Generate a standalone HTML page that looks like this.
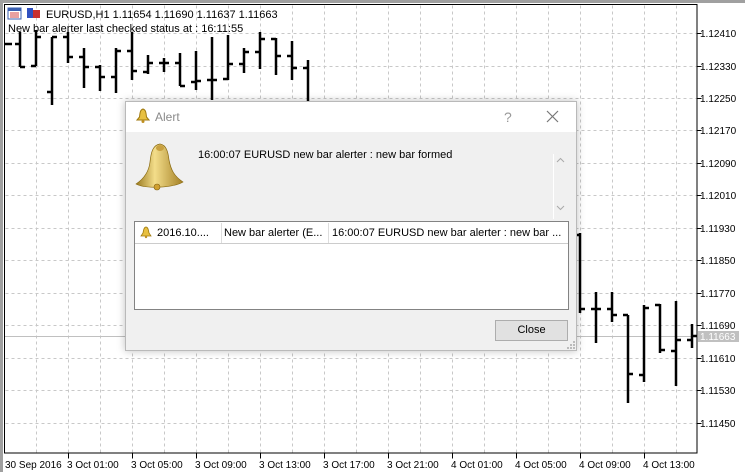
<!DOCTYPE html>
<html><head><meta charset="utf-8"><style>
html,body{margin:0;padding:0;width:745px;height:472px;overflow:hidden;background:#fff;font-family:"Liberation Sans",sans-serif;}
#dlg{position:absolute;left:125px;top:101px;width:452px;height:250px;background:#f0f0f0;border:1px solid #b9b9b9;box-shadow:0 0 8px rgba(0,0,0,0.25);box-sizing:border-box;}
#tb{position:absolute;left:0;top:0;width:450px;height:30px;background:#fff;}
.t{position:absolute;white-space:nowrap;font-size:11px;color:#000;overflow:hidden;}
#list{position:absolute;left:8px;top:119px;width:435px;height:89px;background:#fff;border:1px solid #838383;box-sizing:border-box;}
#btn{position:absolute;left:369px;top:218px;width:73px;height:21px;background:#e1e1e1;border:1px solid #adadad;box-sizing:border-box;font-size:11px;text-align:center;line-height:19px;}
</style></head><body>
<svg width="745" height="472" style="position:absolute;left:0;top:0" font-family="Liberation Sans, sans-serif" font-size="10">
<rect x="0" y="0" width="745" height="3" fill="#a0a0a0"/>
<rect x="0" y="0" width="3" height="472" fill="#a0a0a0"/>
<rect x="3" y="3" width="742" height="1" fill="#fff"/>
<path d="M36 5V453M68 5V453M100 5V453M132 5V453M164 5V453M196 5V453M228 5V453M260 5V453M292 5V453M324 5V453M356 5V453M388 5V453M420 5V453M452 5V453M484 5V453M516 5V453M548 5V453M580 5V453M612 5V453M644 5V453M676 5V453M5 33H697M5 66H697M5 98H697M5 130H697M5 163H697M5 195H697M5 228H697M5 260H697M5 293H697M5 325H697M5 358H697M5 390H697M5 423H697" stroke="#c8c8c8" stroke-width="1" stroke-dasharray="3,3" fill="none" transform="translate(0.5,0.5)"/>
<line x1="5" y1="336.5" x2="697" y2="336.5" stroke="#c0c0c0"/>
<rect x="4.5" y="4.5" width="692.5" height="448.5" fill="none" stroke="#000"/>
<path d="M697 33h4M697 66h4M697 98h4M697 130h4M697 163h4M697 195h4M697 228h4M697 260h4M697 293h4M697 325h4M697 358h4M697 390h4M697 423h4M68 453v5M132 453v5M196 453v5M260 453v5M324 453v5M388 453v5M452 453v5M516 453v5M580 453v5M644 453v5" stroke="#000" transform="translate(0.5,0.5)"/>
<g fill="#000">
<text x="700" y="37">1.12410</text><text x="700" y="70">1.12330</text><text x="700" y="102">1.12250</text><text x="700" y="134">1.12170</text><text x="700" y="167">1.12090</text><text x="700" y="199">1.12010</text><text x="700" y="232">1.11930</text><text x="700" y="264">1.11850</text><text x="700" y="297">1.11770</text><text x="700" y="329">1.11690</text><text x="700" y="362">1.11610</text><text x="700" y="394">1.11530</text><text x="700" y="427">1.11450</text>
<text x="5" y="468">30 Sep 2016</text><text x="67" y="468">3 Oct 01:00</text><text x="131" y="468">3 Oct 05:00</text><text x="195" y="468">3 Oct 09:00</text><text x="259" y="468">3 Oct 13:00</text><text x="323" y="468">3 Oct 17:00</text><text x="387" y="468">3 Oct 21:00</text><text x="451" y="468">4 Oct 01:00</text><text x="515" y="468">4 Oct 05:00</text><text x="579" y="468">4 Oct 09:00</text><text x="643" y="468">4 Oct 13:00</text>
</g>
<rect x="698" y="331" width="41" height="11" fill="#c0c0c0"/>
<text x="700" y="340" fill="#fff">1.11663</text>
<path stroke="#000" stroke-width="2.5" fill="none" d="
M5 44H12
M20 32V67M15 44H20M20 67H25
M36 30V66M31 66H36M36 37H41
M52 37V105M47 92H52M52 37H57
M68 32V63M63 37H68M68 57H73
M84 48V88M79 57H84M84 67H89
M100 65V91M95 67H100M100 77H105
M116 48V93M111 77H116M116 51H121
M132 32V80M127 51H132M132 71H137
M148 55V74M143 72H148M148 63H153
M164 58V72M159 63H164M164 63H169
M180 53V86M175 63H180M180 86H185
M196 51V90M191 82H196M196 81H201
M212 37V100M207 80H212M212 80H217
M228 35V80M223 79H228M228 64H233
M244 48V73M239 64H244M244 52H249
M260 32V69M255 52H260M260 39H265
M276 38V75M271 39H276M276 56H281
M292 41V80M287 56H292M292 68H297
M308 60V101M303 68H308
M580 233V313M575 235H580M580 309H585
M596 292V343M591 309H596M596 309H601
M612 292V322M607 309H612M612 315H617
M628 315V403M623 315H628M628 374H633
M644 305V382M639 375H644M644 308H649
M660 304V353M655 305H660M660 350H665
M676 301V386M671 351H676M676 340H681
M692 324V348M687 340H692M692 336H697"/>
<rect x="8" y="8" width="13" height="11" fill="#fff" stroke="#3a5fb0"/>
<rect x="8" y="8" width="13" height="3" fill="#3a5fb0"/>
<path d="M10 13h9M10 15h9M10 17h9" stroke="#d04040"/>
<rect x="27" y="8" width="6" height="10" fill="#3050c0"/>
<rect x="33" y="10" width="7" height="8" fill="#c83030"/>
<text x="46" y="18" font-size="11">EURUSD,H1  1.11654 1.11690 1.11637 1.11663</text>
<text x="8" y="32" font-size="11">New bar alerter last checked status at : 16:11:55</text>
</svg>
<div id="dlg">
<div id="tb">
<svg width="14" height="16" style="position:absolute;left:10px;top:6px"><path d="M7 1C4 2 4 5 3.5 9L1 12H13L10.5 9C10 5 10 2 7 1Z" fill="#e8c040" stroke="#a07a10"/><circle cx="7" cy="13.5" r="1.5" fill="#c09020"/></svg>
<div class="t" style="left:29px;top:8px;font-size:12px;color:#8a8a8a">Alert</div>
<div class="t" style="left:378px;top:7px;font-size:14px;color:#999">?</div>
<svg width="14" height="14" style="position:absolute;left:420px;top:8px"><path d="M1 1L12 12M12 1L1 12" stroke="#777" stroke-width="1.2"/></svg>
</div>
<svg width="54" height="54" style="position:absolute;left:7px;top:38px">
<defs><linearGradient id="g" x1="0" x2="1"><stop offset="0" stop-color="#9a7a20"/><stop offset="0.4" stop-color="#f3dd8a"/><stop offset="1" stop-color="#a48025"/></linearGradient></defs>
<path d="M27 4C20 5 18 12 17 22C16 31 12 38 3 44C12 49 40 48 50 42C41 36 38 30 36 20C35 11 33 5 27 4Z" fill="url(#g)" stroke="#8a6a10" stroke-width="0.7"/>
<ellipse cx="27" cy="8" rx="4" ry="3" fill="#c8a040"/>
<circle cx="24" cy="47" r="3" fill="#d0a030" stroke="#806010" stroke-width="0.6"/>
</svg>
<div class="t" style="left:72px;top:47px">16:00:07 EURUSD new bar alerter : new bar formed</div>
<div style="position:absolute;left:427px;top:52px;width:1px;height:65px;background:#fff"></div>
<svg width="12" height="60" style="position:absolute;left:429px;top:52px"><path d="M2 8L5.5 4.5L9 8M2 52L5.5 55.5L9 52" stroke="#aaa" fill="none"/></svg>
<div id="list">
<div style="position:absolute;left:0;top:0;width:433px;height:21px;border-bottom:1px solid #ccc"></div>
<div style="position:absolute;left:86px;top:1px;width:1px;height:20px;background:#ddd"></div>
<div style="position:absolute;left:193px;top:1px;width:1px;height:20px;background:#ddd"></div>
<svg width="12" height="13" style="position:absolute;left:5px;top:4px"><path d="M6 1C4 1 3.5 4 3 7L1 10H11L9 7C8.5 4 8 1 6 1Z" fill="#e8c040" stroke="#a07a10" stroke-width="0.8"/><circle cx="6" cy="11" r="1.2" fill="#c09020"/></svg>
<div class="t" style="left:22px;top:5px">2016.10....</div>
<div class="t" style="left:89px;top:5px">New bar alerter (E...</div>
<div class="t" style="left:197px;top:5px">16:00:07 EURUSD new bar alerter : new bar ...</div>
</div>
<div id="btn">Close</div>
<svg width="10" height="10" style="position:absolute;left:440px;top:238px"><g fill="#bbb"><rect x="7" y="1" width="2" height="2"/><rect x="4" y="4" width="2" height="2"/><rect x="7" y="4" width="2" height="2"/><rect x="1" y="7" width="2" height="2"/><rect x="4" y="7" width="2" height="2"/><rect x="7" y="7" width="2" height="2"/></g></svg>
</div>
</body></html>
